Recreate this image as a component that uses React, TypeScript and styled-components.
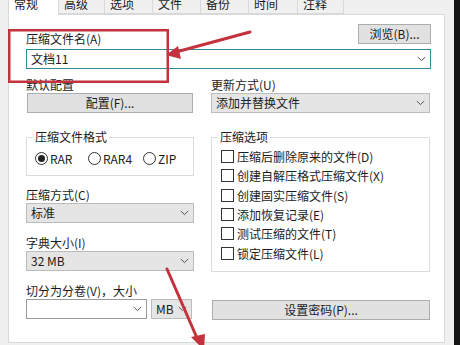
import React from 'react';
import styled, { createGlobalStyle } from 'styled-components';

const Global = createGlobalStyle`
  html, body { margin: 0; padding: 0; background: #f0f0f0; }
  body {
    width: 460px; height: 345px; overflow: hidden;
    font-family: "Noto Sans CJK SC", "Noto Sans", sans-serif;
    font-size: 12px; color: #1b1b1b;
  }
  * { box-sizing: border-box; }
`;

const Screen = styled.div`
  position: relative;
  display: flex;
  width: 460px;
  height: 345px;
  overflow: hidden;
`;

const Dialog = styled.div`
  width: 454px;
  display: flex;
  flex-direction: column;
  background: #f0f0f0;
`;

const DarkEdge = styled.div`
  width: 6px;
  background: #161616;
`;

const TabRow = styled.div`
  display: flex;
  margin-top: -8px;
  padding-left: 8px;
  height: 22px;
  position: relative;
  z-index: 1;
`;

const Tab = styled.div<{ $w: number; $active?: boolean }>`
  width: ${p => p.$w}px;
  height: ${p => (p.$active ? 23 : 22)}px;
  padding: 3px 0 0 5px;
  line-height: 16px;
  background: ${p => (p.$active ? '#ffffff' : '#f0f0f0')};
  border: 1px solid #d9d9d9;
  border-bottom: ${p => (p.$active ? 'none' : '1px solid #d9d9d9')};
  margin-left: -1px;
  &:first-child { margin-left: 0; }
`;

const Panel = styled.div`
  margin-left: 8px;
  width: 437px;
  height: 329px;
  background: #ffffff;
  border: 1px solid #d9d9d9;
  padding: 9px 13px 0 17px;
  display: flex;
  flex-direction: column;
`;

const TopRow = styled.div`
  display: flex;
  justify-content: space-between;
  align-items: flex-end;
  height: 20px;
`;

const Label = styled.div`
  height: 16px;
  line-height: 16px;
  white-space: nowrap;
`;

const TopLabel = styled(Label)`
  margin-bottom: -3px;
`;

const Button = styled.div<{ $w?: number }>`
  width: ${p => (p.$w ? `${p.$w}px` : 'auto')};
  height: 20px;
  background: #e1e1e1;
  border: 1px solid #adadad;
  display: flex;
  align-items: center;
  justify-content: center;
  line-height: 18px;
  white-space: nowrap;
`;

const Combo = styled.div<{ $variant?: 'focus' | 'edit' | 'drop'; $w?: number }>`
  width: ${p => (p.$w ? `${p.$w}px` : '100%')};
  height: 20px;
  display: flex;
  align-items: center;
  justify-content: space-between;
  padding: 0 4px 0 4px;
  background: ${p => (p.$variant === 'drop' ? '#e5e5e5' : '#ffffff')};
  border: 1px solid ${p => (p.$variant === 'focus' ? '#2f8b9c' : p.$variant === 'edit' ? '#9a9a9a' : '#bcbcbc')};
  line-height: 18px;
  white-space: nowrap;
`;

const Columns = styled.div`
  display: grid;
  grid-template-columns: 168px 219px;
  column-gap: 17px;
  margin-top: 8px;
`;

const Column = styled.div`
  display: flex;
  flex-direction: column;
`;

const Group = styled.fieldset<{ $h: number; $mt: number }>`
  margin: ${p => p.$mt}px 0 0 0;
  padding: 0;
  height: ${p => p.$h}px;
  border: 1px solid #dcdcdc;
  min-width: 0;
`;

const Legend = styled.legend`
  margin-left: 6px;
  padding: 0 2px;
  line-height: 14px;
  font-size: 12px;
`;

const RadioRow = styled.div`
  display: flex;
  align-items: center;
  padding: 6px 0 0 8px;
`;

const RadioItem = styled.div<{ $w: number }>`
  display: flex;
  align-items: center;
  gap: 2px;
  width: ${p => p.$w}px;
  font-size: 12px;
`;

const RadioCircle = styled.span<{ $on?: boolean }>`
  width: 13px;
  height: 13px;
  border-radius: 50%;
  border: 1px solid #333;
  background: #fff;
  display: flex;
  align-items: center;
  justify-content: center;
  &::after {
    content: '';
    width: 7px;
    height: 7px;
    border-radius: 50%;
    background: ${p => (p.$on ? '#222' : 'transparent')};
  }
`;

const CheckList = styled.div`
  display: flex;
  flex-direction: column;
  padding: 3px 0 0 9px;
`;

const CheckRow = styled.div`
  display: flex;
  align-items: center;
  height: 19.3px;
  gap: 3px;
  white-space: nowrap;
`;

const CheckBox = styled.span`
  width: 13px;
  height: 13px;
  border: 1px solid #333;
  background: #fff;
  flex: none;
`;

const SplitRow = styled.div`
  display: flex;
  gap: 4px;
`;

const Overlay = styled.svg`
  position: absolute;
  left: 0;
  top: 0;
  pointer-events: none;
  z-index: 5;
`;

const Chevron = () => (
  <svg width="9" height="6" viewBox="0 0 9 6">
    <path d="M0.8 1 L4.5 4.6 L8.2 1" fill="none" stroke="#555" strokeWidth="1" />
  </svg>
);

const tabs: [string, number][] = [
  ['常规', 51], ['高级', 47], ['选项', 49], ['文件', 49], ['备份', 49], ['时间', 50], ['注释', 47],
];

const options = [
  '压缩后删除原来的文件(D)',
  '创建自解压格式压缩文件(X)',
  '创建固实压缩文件(S)',
  '添加恢复记录(E)',
  '测试压缩的文件(T)',
  '锁定压缩文件(L)',
];

export default function App() {
  return (
    <Screen>
      <Global />
      <Dialog>
        <TabRow>
          {tabs.map(([t, w], i) => (
            <Tab key={t} $w={w} $active={i === 0}>{t}</Tab>
          ))}
        </TabRow>
        <Panel>
          <TopRow>
            <TopLabel>压缩文件名(A)</TopLabel>
            <Button $w={73}>浏览(B)...</Button>
          </TopRow>
          <Combo $variant="focus" style={{ marginTop: 5 }}>
            <span>文档11</span>
            <Chevron />
          </Combo>
          <Columns>
            <Column>
              <Label>默认配置</Label>
              <Button style={{ margin: '0 1px' }}>配置(F)...</Button>
              <Group $h={46} $mt={17}>
                <Legend>压缩文件格式</Legend>
                <RadioRow>
                  <RadioItem $w={53}><RadioCircle $on />RAR</RadioItem>
                  <RadioItem $w={55}><RadioCircle />RAR4</RadioItem>
                  <RadioItem $w={40}><RadioCircle />ZIP</RadioItem>
                </RadioRow>
              </Group>
              <Label style={{ marginTop: 11 }}>压缩方式(C)</Label>
              <Combo $variant="drop"><span>标准</span><Chevron /></Combo>
              <Label style={{ marginTop: 12 }}>字典大小(I)</Label>
              <Combo $variant="drop"><span>32 MB</span><Chevron /></Combo>
              <Label style={{ marginTop: 12 }}>切分为分卷(V)，大小</Label>
              <SplitRow>
                <Combo $variant="edit" $w={121}><span /><Chevron /></Combo>
                <Combo $variant="drop" $w={41}><span>MB</span><Chevron /></Combo>
              </SplitRow>
            </Column>
            <Column>
              <Label>更新方式(U)</Label>
              <Combo $variant="drop"><span>添加并替换文件</span><Chevron /></Combo>
              <Group $h={142} $mt={17}>
                <Legend>压缩选项</Legend>
                <CheckList>
                  {options.map(o => (
                    <CheckRow key={o}><CheckBox />{o}</CheckRow>
                  ))}
                </CheckList>
              </Group>
              <Button style={{ marginTop: 28, marginLeft: 1 }}>设置密码(P)...</Button>
            </Column>
          </Columns>
        </Panel>
      </Dialog>
      <DarkEdge />
      <Overlay width="460" height="345" viewBox="0 0 460 345">
        <rect x="9.25" y="30.25" width="158.5" height="51.5" fill="none" stroke="#c4323d" strokeWidth="2.5" />
        <line x1="250" y1="32" x2="176" y2="52" stroke="#c4323d" strokeWidth="3" strokeLinecap="round" />
        <polygon points="166,55 178,46 181,59" fill="#c4323d" />
        <line x1="167" y1="269" x2="197" y2="338" stroke="#c4323d" strokeWidth="3" strokeLinecap="round" />
        <polygon points="191,337 205,334 204,350" fill="#c4323d" />
      </Overlay>
    </Screen>
  );
}
